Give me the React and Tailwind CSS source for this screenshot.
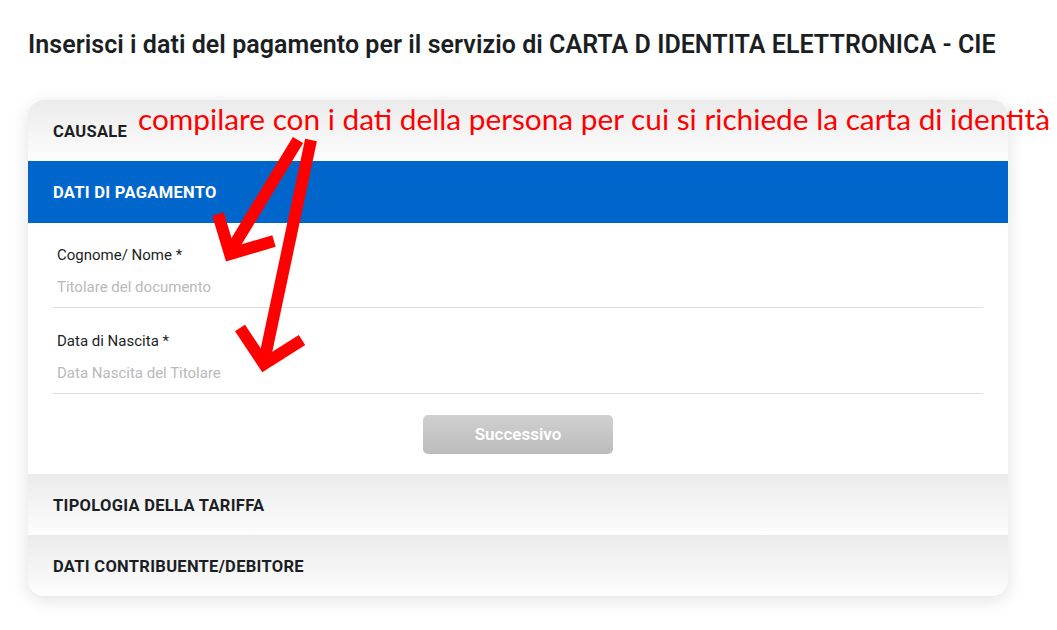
import React from 'react'

const font = { fontFamily: 'Roboto, "Noto Sans", sans-serif' }

function Section({ title }) {
  return (
    <div className="h-[61px] flex items-center px-[25px] pt-[3px] bg-gradient-to-b from-[#ebebeb] to-[#fdfdfd]">
      <span className="text-[16.5px] font-bold text-[#1b1f24] tracking-[0.3px]">{title}</span>
    </div>
  )
}

function Field({ label, placeholder, top }) {
  return (
    <div className={top}>
      <div className="text-[15px] text-[#1b1f24] pl-[4px] leading-[20px]">{label}</div>
      <div className="text-[15px] text-[#b9b9b9] pl-[4px] mt-[12px] leading-[20px] pb-[10px] border-b border-[#dedede]">
        {placeholder}
      </div>
    </div>
  )
}

export default function App() {
  return (
    <div className="relative w-[1057px] h-[630px] bg-white overflow-hidden" style={font}>
      <h1 className="pl-[28px] pt-[29px] text-[25px] font-semibold text-[#1b1f24] tracking-[0.05px] leading-[32px]">
        Inserisci i dati del pagamento per il servizio di CARTA D IDENTITA ELETTRONICA - CIE
      </h1>

      <div className="ml-[28px] mt-[39px] w-[980px] rounded-[16px] overflow-hidden shadow-[0_4px_18px_rgba(0,0,0,0.12)]">
        <Section title="CAUSALE" />
        <div className="h-[62px] flex items-center px-[25px] pt-[3px] bg-[#0066cc]">
          <span className="text-[16.5px] font-bold text-white tracking-[0.3px]">DATI DI PAGAMENTO</span>
        </div>
        <div className="bg-white px-[25px] pb-[20px]">
          <Field top="pt-[22px]" label="Cognome/ Nome *" placeholder="Titolare del documento" />
          <Field top="pt-[23px]" label="Data di Nascita *" placeholder="Data Nascita del Titolare" />
          <div className="flex justify-center pt-[21px]">
            <button className="w-[190px] h-[39px] rounded-[5px] bg-gradient-to-b from-[#d0d0d0] to-[#bcbcbc] text-white text-[17px] font-semibold">
              Successivo
            </button>
          </div>
        </div>
        <Section title="TIPOLOGIA DELLA TARIFFA" />
        <Section title="DATI CONTRIBUENTE/DEBITORE" />
      </div>

      <div
        className="absolute left-[138px] top-[100px] text-[29.8px] leading-[38px] text-[#ff0000] whitespace-nowrap"
        style={{ fontFamily: 'Lato, "Open Sans", sans-serif' }}
      >
        compilare con i dati della persona per cui si richiede la carta di identità
      </div>

      <svg className="absolute left-0 top-0" width="1057" height="630" viewBox="0 0 1057 630">
        <g stroke="#ff0000" strokeWidth="12" fill="none" strokeLinecap="butt" strokeLinejoin="miter">
          <line x1="298" y1="140" x2="230" y2="252" />
          <polyline points="218,214 230,254 274,241" />
          <line x1="311" y1="140" x2="264" y2="362" />
          <polyline points="240,328 264,364 302,340" />
        </g>
      </svg>
    </div>
  )
}
